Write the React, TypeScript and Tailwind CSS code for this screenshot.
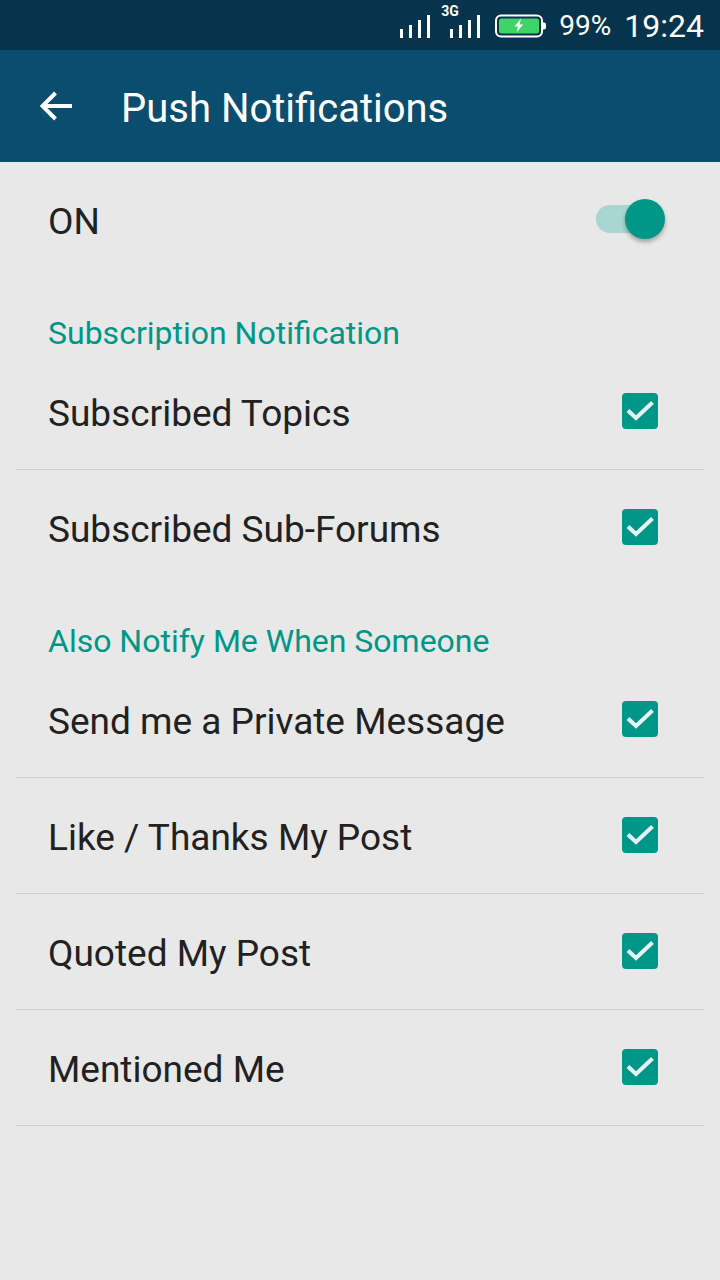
import React from 'react'

const Signal: React.FC = () => (
  <div className="flex items-end gap-[6px]">
    <div className="h-[9px] w-[3px] bg-white" />
    <div className="h-[13px] w-[3px] bg-white" />
    <div className="h-[18px] w-[3px] bg-white" />
    <div className="h-[23px] w-[3px] bg-white" />
  </div>
)

const Battery: React.FC = () => (
  <svg fill="none" height="24" viewBox="0 0 52 24" width="52">
    <rect height="21" rx="5" stroke="#fff" strokeWidth="2" width="46" x="1" y="1.5" />
    <rect fill="#3fd467" height="15" rx="2.5" width="40" x="4" y="4.5" />
    <path d="M47.5 8.5h1.5a2 2 0 0 1 2 2v3a2 2 0 0 1-2 2h-1.5z" fill="#fff" />
    <path d="M26 4.5 19.5 12.5h3.5l-1.5 6 6.5-8h-3.5z" fill="#fff" />
  </svg>
)

const Checkbox: React.FC = () => (
  <div className="flex h-[36px] w-[36px] items-center justify-center rounded-[4px] bg-[#009688]">
    <svg fill="none" height="36" viewBox="0 0 36 36" width="36">
      <path d="M6 17.5 14 25 30.5 9.5" stroke="#e4f3f1" strokeWidth="4" />
    </svg>
  </div>
)

const SectionHeader: React.FC<{ title: string }> = ({ title }) => (
  <div className="flex h-[76px] items-center px-[48px] pt-[34px] text-[32px] leading-[36px] text-[#009688]">
    {title}
  </div>
)

const Row: React.FC<{ label: string; divider?: boolean }> = ({ label, divider = true }) => (
  <div className="mx-[16px] h-[116px]">
    <div
      className={`flex h-full items-center justify-between pb-[2px] pl-[32px] pr-[46px] ${
        divider ? 'border-b border-[#cfcfcf]' : ''
      }`}
    >
      <span className="pt-[6px] text-[37px] leading-[44px] text-[#212121]">{label}</span>
      <Checkbox />
    </div>
  </div>
)

export default function App() {
  return (
    <div className="flex h-[1280px] w-[720px] flex-col overflow-hidden bg-[#e8e8e8] font-['Roboto',sans-serif]">
      {/* status bar */}
      <div className="flex h-[50px] items-center justify-end bg-[#06344c] pr-[16px] pt-[2px] text-white">
        <Signal />
        <div className="relative ml-[20px]">
          <span className="absolute left-[-9px] top-[-12px] text-[14px] font-bold leading-[16px]">3G</span>
          <Signal />
        </div>
        <div className="ml-[15px]">
          <Battery />
        </div>
        <span className="ml-[12px] text-[28px] leading-[32px]">99%</span>
        <span className="ml-[13px] text-[32px] leading-[38px]">19:24</span>
      </div>

      {/* toolbar */}
      <div className="flex h-[112px] items-center bg-[#0a4d6e] pl-[40px] text-white">
        <svg fill="none" height="30" viewBox="0 0 32 30" width="32">
          <path d="M32 15H3M15.5 2 2.5 15l13 13" stroke="#fff" strokeWidth="4" />
        </svg>
        <span className="ml-[49px] pt-[5px] text-[40px] leading-[44px]">Push Notifications</span>
      </div>

      {/* master switch */}
      <div className="flex h-[116px] items-center justify-between pl-[48px] pr-[69px]">
        <span className="pt-[4px] text-[37px] leading-[44px] text-[#212121]">ON</span>
        <div className="relative mb-[2px] h-[28px] w-[55px] rounded-full bg-[#a9d6d1]">
          <div className="absolute right-[-14px] top-[-6px] h-[40px] w-[40px] rounded-full bg-[#009688] shadow-[0_3px_4px_rgba(0,0,0,0.3)]" />
        </div>
      </div>

      <SectionHeader title="Subscription Notification" />
      <Row label="Subscribed Topics" />
      <Row divider={false} label="Subscribed Sub-Forums" />

      <SectionHeader title="Also Notify Me When Someone" />
      <Row label="Send me a Private Message" />
      <Row label="Like / Thanks My Post" />
      <Row label="Quoted My Post" />
      <Row label="Mentioned Me" />
    </div>
  )
}
